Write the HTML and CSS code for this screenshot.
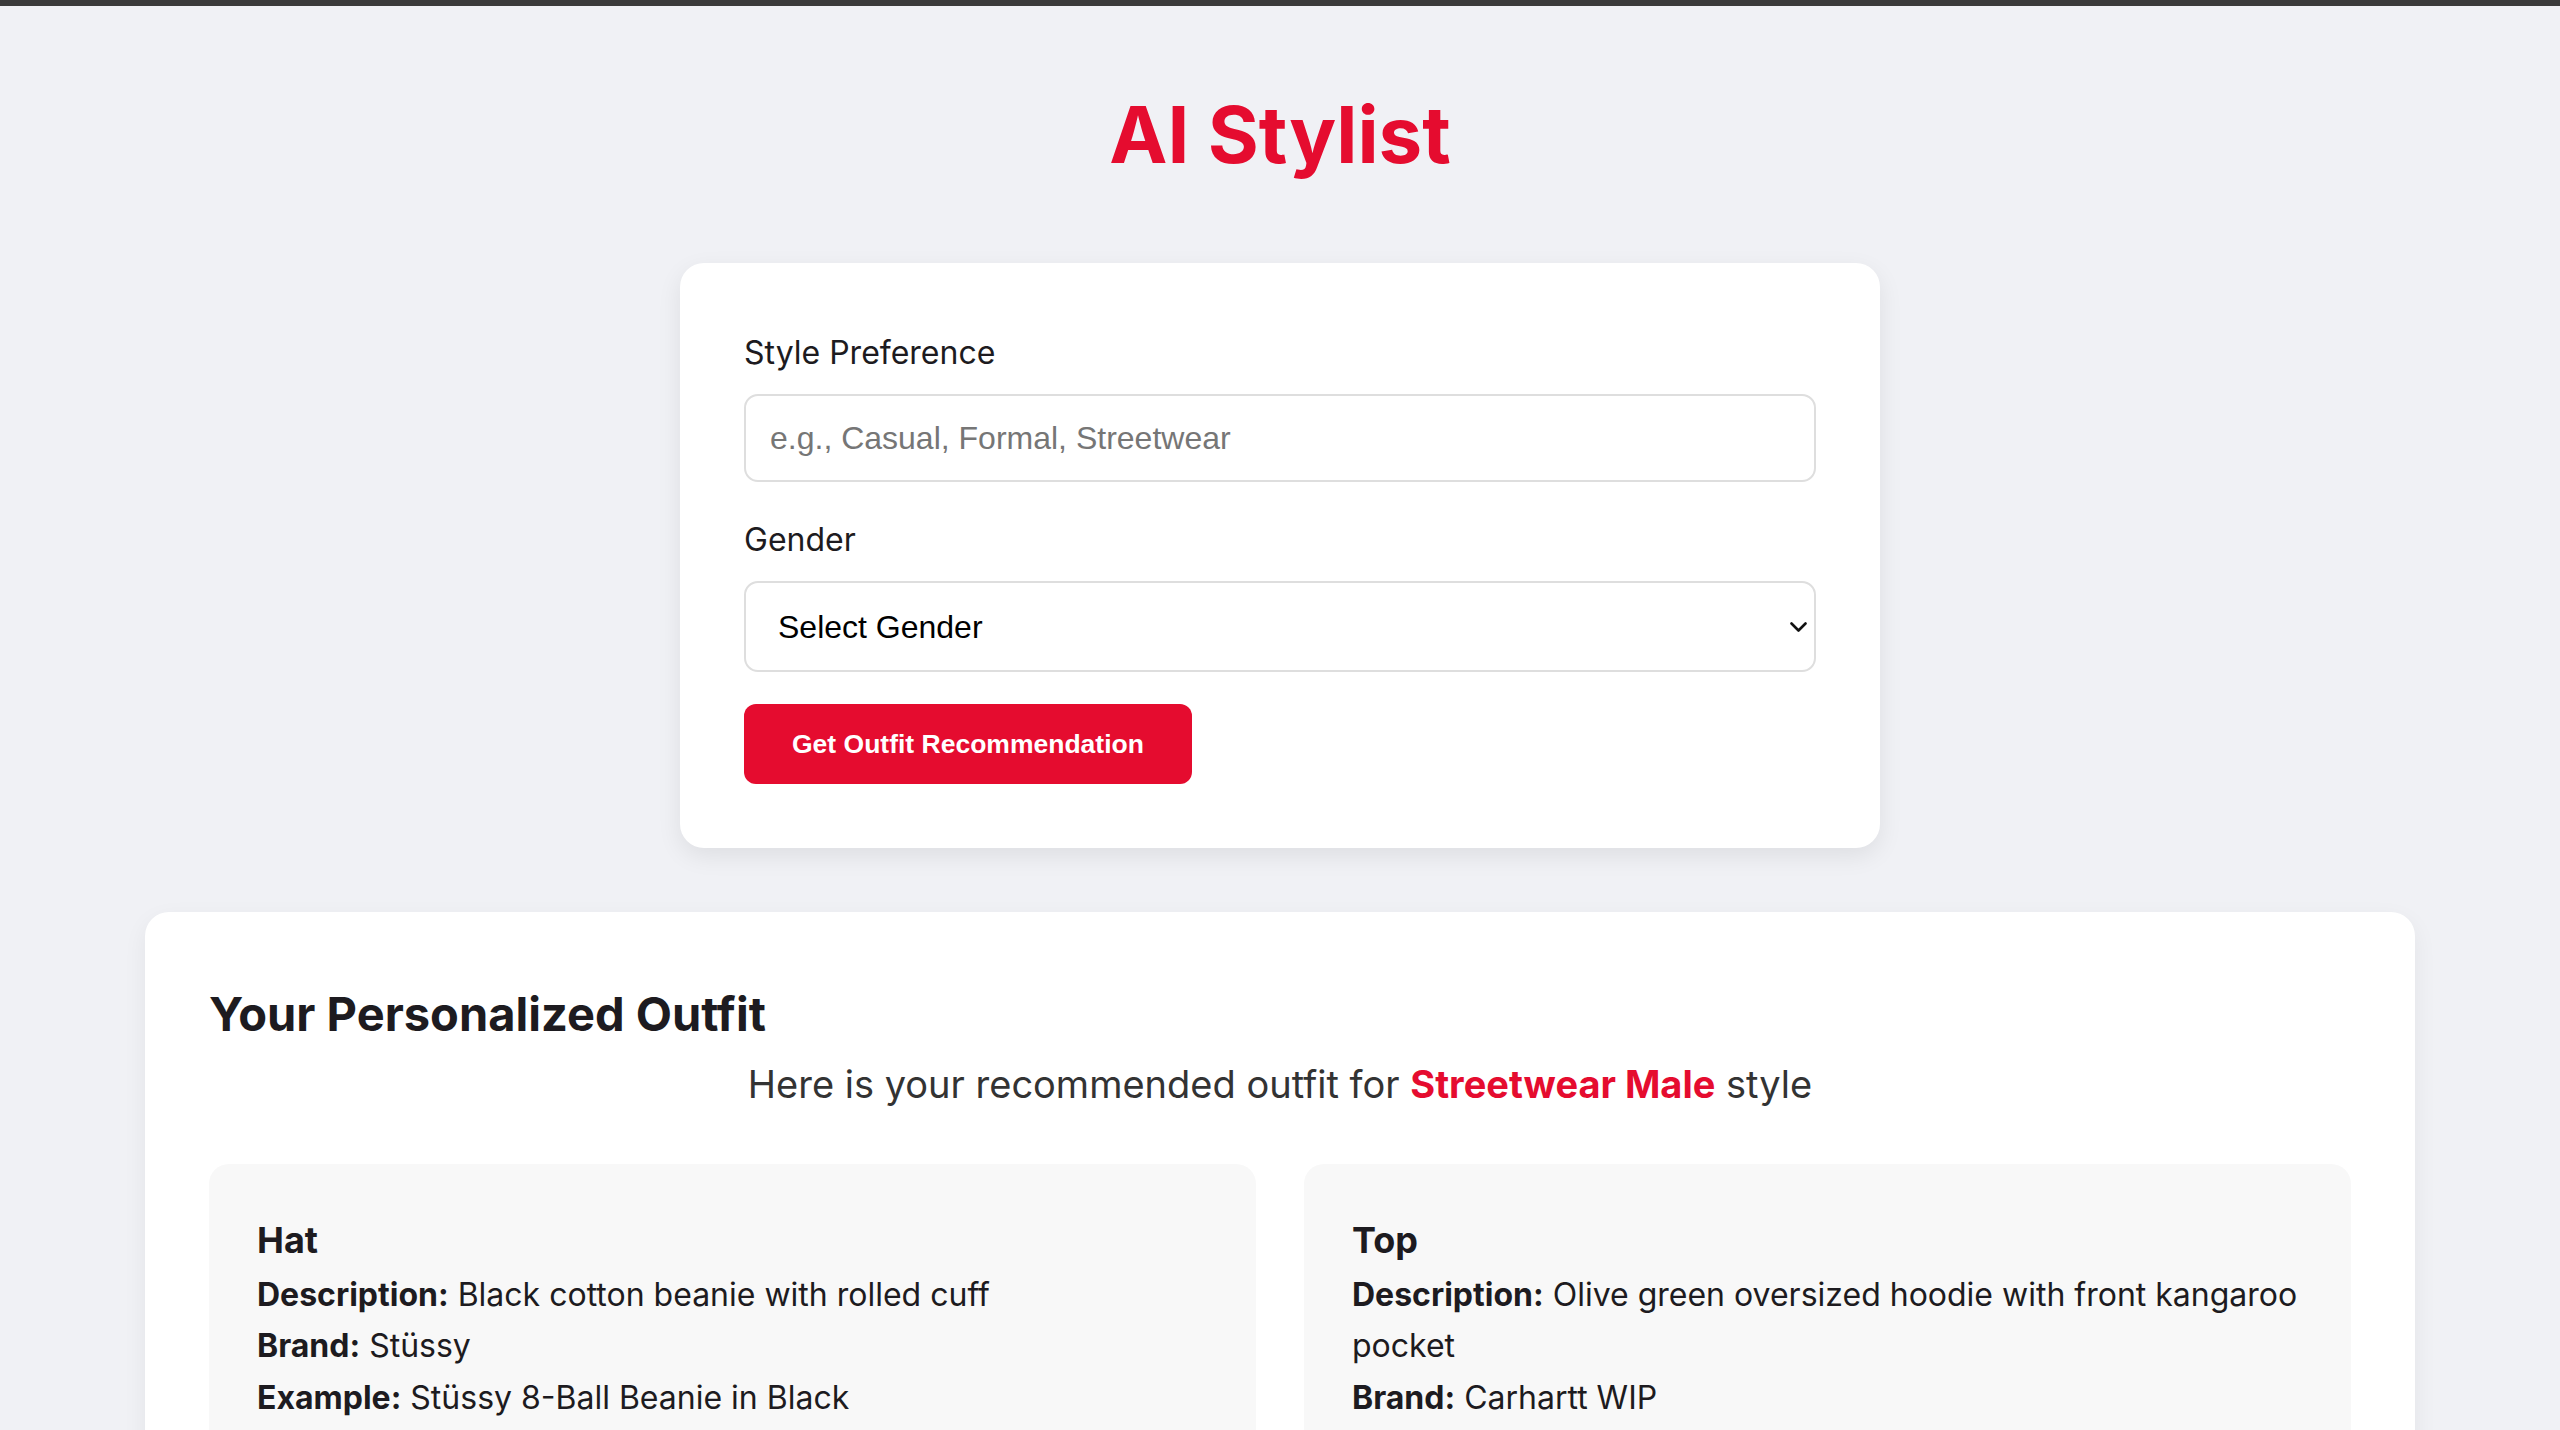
FILE: index.html
```html
<!DOCTYPE html>
<html lang="en">
<head>
<meta charset="utf-8">
<title>AI Stylist</title>
<link rel="stylesheet" href="styles.css">
</head>
<body>
<div class="topbar"></div>
<main class="page">
  <h1 class="title">AI Stylist</h1>

  <form class="form-card">
    <div class="form-group">
      <label class="label" for="style">Style Preference</label>
      <input class="input" id="style" type="text" placeholder="e.g., Casual, Formal, Streetwear">
    </div>
    <div class="form-group">
      <label class="label" for="gender">Gender</label>
      <div class="select-wrap">
        <select class="select" id="gender">
          <option>Select Gender</option>
          <option>Male</option>
          <option>Female</option>
        </select>
        <svg class="chevron" width="17" height="10" viewBox="0 0 17 10"><path d="M1.5 1.5 L8.5 8.5 L15.5 1.5" fill="none" stroke="#111" stroke-width="2.6" stroke-linecap="round" stroke-linejoin="round"/></svg>
      </div>
    </div>
    <button class="btn" type="button">Get Outfit Recommendation</button>
  </form>

  <section class="result-card">
    <h2 class="result-title">Your Personalized Outfit</h2>
    <p class="result-sub">Here is your recommended outfit for <strong class="accent">Streetwear Male</strong> style</p>
    <div class="items">
      <div class="item">
        <h3 class="item-title">Hat</h3>
        <p class="item-line"><strong>Description:</strong> Black cotton beanie with rolled cuff</p>
        <p class="item-line"><strong>Brand:</strong> Stüssy</p>
        <p class="item-line"><strong>Example:</strong> Stüssy 8-Ball Beanie in Black</p>
      </div>
      <div class="item">
        <h3 class="item-title">Top</h3>
        <p class="item-line"><strong>Description:</strong> Olive green oversized hoodie with front kangaroo pocket</p>
        <p class="item-line"><strong>Brand:</strong> Carhartt WIP</p>
        <p class="item-line"><strong>Example:</strong> Carhartt WIP Hooded Chase Sweatshirt</p>
      </div>
      <div class="item">
        <h3 class="item-title">Bottom</h3>
        <p class="item-line"><strong>Description:</strong> Relaxed fit cargo pants in black</p>
        <p class="item-line"><strong>Brand:</strong> Dickies</p>
        <p class="item-line"><strong>Example:</strong> Dickies Eagle Bend Cargo Pant</p>
      </div>
      <div class="item">
        <h3 class="item-title">Shoes</h3>
        <p class="item-line"><strong>Description:</strong> White low-top leather sneakers</p>
        <p class="item-line"><strong>Brand:</strong> Nike</p>
        <p class="item-line"><strong>Example:</strong> Nike Air Force 1 '07</p>
      </div>
    </div>
  </section>
</main>
</body>
</html>
```
FILE: styles.css
```css
* { box-sizing: border-box; }

html, body {
  margin: 0;
  padding: 0;
}

body {
  background: #f0f1f5;
  font-family: Inter, "Noto Sans", sans-serif;
  color: #1d1b20;
  line-height: 1.6;
}

.topbar {
  height: 6px;
  background: #3b3b3b;
}

.page {
  padding: 0 145px 80px;
}

.title {
  margin: 80px 0 80px;
  text-align: center;
  font-size: 78px;
  font-weight: 700;
  line-height: 97px;
  color: #e50c2f;
}

.form-card {
  width: 1200px;
  margin: 0 auto;
  padding: 64px;
  background: #fff;
  border-radius: 24px;
  box-shadow: 0 8px 24px rgba(0, 0, 0, 0.08);
}

.form-group {
  margin-bottom: 32px;
}

.label {
  display: block;
  margin-bottom: 16px;
  font-size: 32px;
  color: #1d1b20;
}

.input,
.select {
  display: block;
  width: 100%;
  border: 2px solid #dedede;
  border-radius: 14px;
  background: #fff;
  font-family: "Liberation Sans", Arial, sans-serif;
  font-size: 32px;
  color: #000;
  outline: none;
}

.input {
  height: 88px;
  padding: 0 24px;
}

.input::placeholder {
  color: #767676;
}

.select-wrap {
  position: relative;
}

.select {
  height: 91px;
  padding: 0 24px 0 32px;
  appearance: none;
  -webkit-appearance: none;
}

.chevron {
  position: absolute;
  right: 9px;
  top: 41px;
  pointer-events: none;
}

.btn {
  display: block;
  height: 80px;
  margin-top: 1px;
  padding: 0 48px;
  border: none;
  border-radius: 12px;
  background: #e50c2f;
  color: #fff;
  font-family: "Liberation Sans", Arial, sans-serif;
  font-weight: 700;
  font-size: 26.5px;
  cursor: pointer;
}

.result-card {
  margin-top: 64px;
  padding: 64px;
  background: #fff;
  border-radius: 24px;
  box-shadow: 0 8px 24px rgba(0, 0, 0, 0.06);
}

.result-title {
  margin: 0;
  font-size: 47px;
  font-weight: 700;
  color: #1d1b20;
}

.result-sub {
  margin: 0 0 48px;
  text-align: center;
  font-size: 38px;
  line-height: 64px;
  color: #333;
}

.accent {
  color: #e50c2f;
  font-weight: 700;
}

.items {
  display: grid;
  grid-template-columns: 1fr 1fr;
  gap: 48px;
}

.item {
  padding: 48px;
  background: #f8f8f8;
  border-radius: 20px;
}

.item-title {
  margin: 0;
  font-size: 36px;
  font-weight: 700;
  color: #1d1b20;
}

.item-line {
  margin: 0;
  font-size: 32px;
  color: #1d1b20;
}

.item-line strong {
  font-weight: 700;
}
```
